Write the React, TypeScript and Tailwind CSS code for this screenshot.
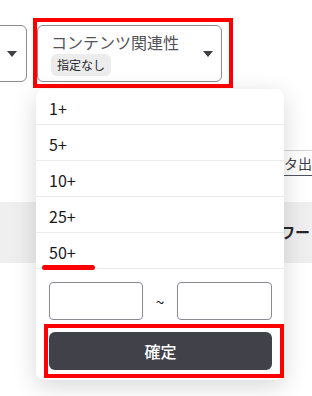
import React from "react";

const Caret = () => (
  <svg width="10" height="6" viewBox="0 0 10 6" className="shrink-0">
    <path d="M0 0h10L5 6z" fill="#3f3f46" />
  </svg>
);

const options = ["1+", "5+", "10+", "25+", "50+"];

export default function App() {
  return (
    <div className="relative w-[312px] h-[396px] overflow-hidden bg-white font-['Noto_Sans_CJK_JP','Noto_Sans',sans-serif] text-[#18181b]">
      {/* Filter bar */}
      <div className="flex items-start gap-[6px] pt-[18px]">
        <div className="-ml-[33px] mt-[7px] flex h-[57px] w-[60px] items-center justify-end rounded-[6px] border border-[#8b8b93] pr-[9px]">
          <Caret />
        </div>
        <div className="h-[70px] w-[200px] border-4 border-[#ff0000] pt-[3px]">
          <div className="flex h-[57px] w-[185px] items-center justify-between rounded-[6px] border border-[#8b8b93] bg-white pl-[13px] pr-[8px]">
            <div className="flex flex-col items-start self-start pt-[4px]">
              <span className="text-[16px] leading-6 text-[#52525b]">コンテンツ関連性</span>
              <span className="rounded-[6px] bg-[#ececec] px-[6px] text-[12px] leading-[22px] text-[#27272a]">
                指定なし
              </span>
            </div>
            <Caret />
          </div>
        </div>
      </div>

      {/* Page content behind the menu */}
      <div className="mt-[62px] flex justify-end">
        <div className="-mr-[34px] whitespace-nowrap border-t border-b border-t-[#d4d4d8] border-b-[#52525b] pl-[5px] pr-[20px] text-[14px] leading-[24px] text-[#3f3f46]">
          データ出力
        </div>
      </div>
      <div className="mt-[26px] flex h-[61px] items-center justify-end bg-[#efefef]">
        <span className="-mr-[28px] whitespace-nowrap text-[15px] font-bold text-[#27272a]">キーワード数</span>
      </div>

      {/* Dropdown menu */}
      <div className="absolute left-[36px] top-[89px] h-[291px] w-[248px] rounded-lg bg-white shadow-[0_6px_24px_rgba(0,0,0,0.16)]">
        {options.map((o, i) => (
          <div
            key={o}
            className="relative flex h-[36px] items-center border-b border-[#ececec] pl-[13px] pt-[2px] text-[16px]"
          >
            {o}
            {i === options.length - 1 && (
              <span className="absolute -bottom-[2px] left-[6px] z-10 h-[5px] w-[53px] rounded-full bg-[#ff0000]" />
            )}
          </div>
        ))}
        <div className="flex items-center pl-[13px] pt-[13px]">
          <div className="h-[38px] w-[94px] rounded-[4px] border border-[#8b8b93]" />
          <span className="w-[34px] text-center text-[16px] leading-none">~</span>
          <div className="h-[38px] w-[95px] rounded-[4px] border border-[#8b8b93]" />
        </div>
        <div className="ml-[8px] mt-[4px] h-[54px] w-[240px] border-4 border-[#ff0000] pl-[1px] pt-[4px]">
          <button className="flex h-[38px] w-[223px] items-center justify-center rounded-[6px] bg-[#41414a] text-[16px] font-medium text-white">
            確定
          </button>
        </div>
      </div>
    </div>
  );
}
